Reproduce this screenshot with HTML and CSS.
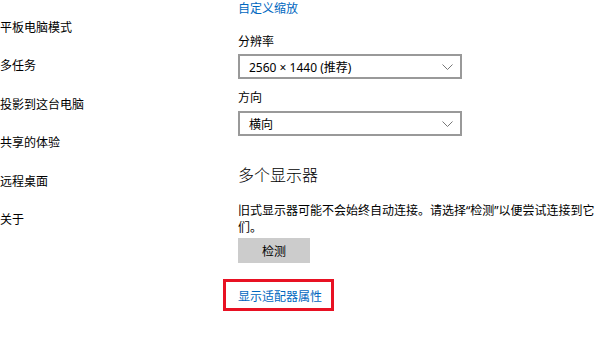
FILE: index.html
```html
<!DOCTYPE html>
<html lang="zh-CN">

<head>
    <meta charset="UTF-8">
    <meta name="viewport" content="width=device-width, initial-scale=1.0">
    <title>显示设置</title>
    <link rel="stylesheet" href="styles.css">
</head>

<body>
    <div class="page">
        <ul class="nav">
            <li>平板电脑模式</li>
            <li>多任务</li>
            <li>投影到这台电脑</li>
            <li>共享的体验</li>
            <li>远程桌面</li>
            <li>关于</li>
        </ul>

        <div class="content">
            <a href="#" class="link top-link">自定义缩放</a>

            <div class="label label-res">分辨率</div>
            <div class="select">
                <span>2560 × 1440 (推荐)</span>
                <svg class="chev" width="11" height="6" viewBox="0 0 11 6">
                    <path d="M0.5 0.5 L5.5 5.5 L10.5 0.5" fill="none" stroke="#777" stroke-width="1"/>
                </svg>
            </div>

            <div class="label label-dir">方向</div>
            <div class="select select-dir">
                <span>横向</span>
                <svg class="chev" width="11" height="6" viewBox="0 0 11 6">
                    <path d="M0.5 0.5 L5.5 5.5 L10.5 0.5" fill="none" stroke="#777" stroke-width="1"/>
                </svg>
            </div>

            <h2 class="sub">多个显示器</h2>
            <p class="desc">旧式显示器可能不会始终自动连接。请选择“检测”以便尝试连接到它们。</p>
            <button class="btn">检测</button>

            <div class="mark">
                <a href="#" class="link">显示适配器属性</a>
            </div>
        </div>
    </div>
</body>

</html>
```

FILE: styles.css
```css
* {
    margin: 0;
    padding: 0;
    box-sizing: border-box;
}

body {
    background: #fff;
    color: #000;
    font-family: "Noto Sans", "Noto Sans CJK SC", sans-serif;
    font-size: 12px;
}

ul {
    list-style: none;
}

.page {
    display: flex;
    width: 600px;
    height: 342px;
    overflow: hidden;
}

.nav {
    width: 238px;
    flex-shrink: 0;
    padding-top: 9px;
}

.nav li {
    height: 38.4px;
    line-height: 38px;
}

.content {
    display: flex;
    flex-direction: column;
    align-items: flex-start;
    width: 362px;
}

.link {
    color: #0067c0;
    text-decoration: none;
    line-height: 14px;
}

.top-link {
    display: block;
    height: 16px;
    padding-top: 2px;
}

.label {
    line-height: 16px;
}

.label-res {
    margin-top: 18px;
}

.label-dir {
    margin-top: 11px;
}

.select {
    display: flex;
    align-items: center;
    justify-content: space-between;
    width: 224px;
    height: 25px;
    margin-top: 4px;
    padding: 0 7px 0 9px;
    border: 2px solid #999;
}

.select-dir {
    margin-top: 5px;
}

.chev {
    margin-top: 1px;
}

.sub {
    margin-top: 28px;
    font-size: 16px;
    font-weight: 300;
    line-height: 22px;
}

.desc {
    margin-top: 16px;
    width: 360px;
    line-height: 17px;
}

.btn {
    margin-top: 2px;
    width: 72px;
    height: 25px;
    border: none;
    background: #ccc;
    font: inherit;
    color: #000;
}

.mark {
    margin-top: 16px;
    margin-left: -15px;
    width: 111px;
    height: 32px;
    padding: 4px 0 0 12px;
    border: 3px solid #e81123;
}

.mark .link {
    line-height: 22px;
}
```
